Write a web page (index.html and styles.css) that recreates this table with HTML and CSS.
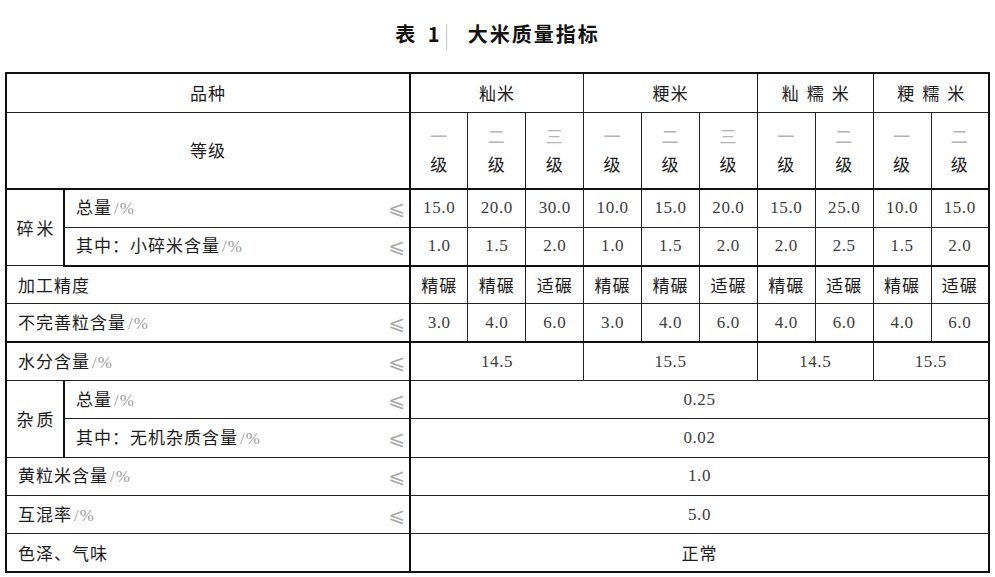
FILE: index.html
```html
<!DOCTYPE html>
<html lang="zh">
<head>
<meta charset="utf-8">
<title>表1 大米质量指标</title>
<link rel="stylesheet" href="styles.css">
</head>
<body>
<h1 class="title"><span class="t1">表 1</span><span class="tbar">|</span><span class="t2">大米质量指标</span></h1>
<table class="qt">
  <colgroup>
    <col class="c1"><col class="c2">
    <col><col><col><col><col><col><col><col><col><col>
  </colgroup>
  <tr class="rh1">
    <td colspan="2" class="cj">品种</td>
    <td colspan="3" class="cj">籼米</td>
    <td colspan="3" class="cj">粳米</td>
    <td colspan="2" class="cj wide">籼糯米</td>
    <td colspan="2" class="cj wide">粳糯米</td>
  </tr>
  <tr class="rh2 thick">
    <td colspan="2" class="cj">等级</td>
    <td class="cj grade"><span class="g">一</span><span>级</span></td>
    <td class="cj grade"><span class="g">二</span><span>级</span></td>
    <td class="cj grade"><span class="g">三</span><span>级</span></td>
    <td class="cj grade"><span class="g">一</span><span>级</span></td>
    <td class="cj grade"><span class="g">二</span><span>级</span></td>
    <td class="cj grade"><span class="g">三</span><span>级</span></td>
    <td class="cj grade"><span class="g">一</span><span>级</span></td>
    <td class="cj grade"><span class="g">二</span><span>级</span></td>
    <td class="cj grade"><span class="g">一</span><span>级</span></td>
    <td class="cj grade"><span class="g">二</span><span>级</span></td>
  </tr>
  <tr class="r">
    <td rowspan="2" class="cj grp">碎米</td>
    <td class="lab"><div class="labin"><span>总量<i>/%</i></span><span class="le">⩽</span></div></td>
    <td class="num">15.0</td><td class="num">20.0</td><td class="num">30.0</td>
    <td class="num">10.0</td><td class="num">15.0</td><td class="num">20.0</td>
    <td class="num">15.0</td><td class="num">25.0</td>
    <td class="num">10.0</td><td class="num">15.0</td>
  </tr>
  <tr class="r thick">
    <td class="lab"><div class="labin"><span>其中：小碎米含量<i>/%</i></span><span class="le">⩽</span></div></td>
    <td class="num">1.0</td><td class="num">1.5</td><td class="num">2.0</td>
    <td class="num">1.0</td><td class="num">1.5</td><td class="num">2.0</td>
    <td class="num">2.0</td><td class="num">2.5</td>
    <td class="num">1.5</td><td class="num">2.0</td>
  </tr>
  <tr class="r">
    <td colspan="2" class="lab"><div class="labin"><span>加工精度</span></div></td>
    <td class="cj">精碾</td><td class="cj">精碾</td><td class="cj">适碾</td>
    <td class="cj">精碾</td><td class="cj">精碾</td><td class="cj">适碾</td>
    <td class="cj">精碾</td><td class="cj">适碾</td>
    <td class="cj">精碾</td><td class="cj">适碾</td>
  </tr>
  <tr class="r thick">
    <td colspan="2" class="lab"><div class="labin"><span>不完善粒含量<i>/%</i></span><span class="le">⩽</span></div></td>
    <td class="num">3.0</td><td class="num">4.0</td><td class="num">6.0</td>
    <td class="num">3.0</td><td class="num">4.0</td><td class="num">6.0</td>
    <td class="num">4.0</td><td class="num">6.0</td>
    <td class="num">4.0</td><td class="num">6.0</td>
  </tr>
  <tr class="r">
    <td colspan="2" class="lab"><div class="labin"><span>水分含量<i>/%</i></span><span class="le">⩽</span></div></td>
    <td colspan="3" class="num">14.5</td>
    <td colspan="3" class="num">15.5</td>
    <td colspan="2" class="num">14.5</td>
    <td colspan="2" class="num">15.5</td>
  </tr>
  <tr class="r">
    <td rowspan="2" class="cj grp">杂质</td>
    <td class="lab"><div class="labin"><span>总量<i>/%</i></span><span class="le">⩽</span></div></td>
    <td colspan="10" class="num">0.25</td>
  </tr>
  <tr class="r">
    <td class="lab"><div class="labin"><span>其中：无机杂质含量<i>/%</i></span><span class="le">⩽</span></div></td>
    <td colspan="10" class="num">0.02</td>
  </tr>
  <tr class="r">
    <td colspan="2" class="lab"><div class="labin"><span>黄粒米含量<i>/%</i></span><span class="le">⩽</span></div></td>
    <td colspan="10" class="num">1.0</td>
  </tr>
  <tr class="r">
    <td colspan="2" class="lab"><div class="labin"><span>互混率<i>/%</i></span><span class="le">⩽</span></div></td>
    <td colspan="10" class="num">5.0</td>
  </tr>
  <tr class="r">
    <td colspan="2" class="lab"><div class="labin"><span>色泽、气味</span></div></td>
    <td colspan="10" class="cj">正常</td>
  </tr>
</table>
</body>
</html>
```
FILE: styles.css
```css
html, body {
  margin: 0;
  padding: 0;
  background: #ffffff;
}
body {
  font-family: "Noto Sans CJK SC", "Noto Sans", sans-serif;
  color: #1c1c1c;
}
.title {
  margin: 0 0 6px 0;
  height: 66px;
  display: flex;
  align-items: center;
  justify-content: center;
  font-size: 20px;
  font-weight: 700;
  color: #111;
  letter-spacing: 2px;
}
.t1 {
  letter-spacing: 4px;
}
.tbar {
  color: #c8c8c8;
  font-weight: 300;
  font-size: 24px;
  margin: 0 16px 0 0;
}
.qt {
  margin-left: 5px;
  width: 985px;
  border-collapse: collapse;
  table-layout: fixed;
  border: 2px solid #111;
}
.c1 { width: 58px; }
.c2 { width: 346px; }
.qt td {
  border: 1px solid #222;
  padding: 0;
  text-align: center;
  vertical-align: middle;
  font-size: 17px;
  line-height: 20px;
}
.rh1 { height: 39px; }
.rh2 { height: 77px; }
.r { height: 38.3px; }
.thick td { border-bottom: 2px solid #111; }
.qt td.lab { border-right: 2px solid #111; }
.qt .rh1 td:first-child, .qt .rh2 td:first-child { border-right: 2px solid #111; }
.cj {
  font-weight: 400;
  letter-spacing: 1px;
}
.wide {
  letter-spacing: 8px;
  text-indent: 8px;
}
.grade span {
  display: block;
  line-height: 28px;
}
.grade .g {
  color: #b4b4b4;
}
.qt td.grp {
  letter-spacing: 3px;
  text-indent: 3px;
  border-right: 2px solid #111;
}
.labin {
  display: flex;
  align-items: center;
  justify-content: space-between;
  padding: 0 4px 0 11px;
  text-align: left;
  letter-spacing: 1px;
}
.labin i {
  font-style: normal;
  color: #9a9a9a;
  font-family: "Liberation Serif", serif;
  font-size: 17px;
  margin-left: 2px;
}
.le {
  font-family: "DejaVu Sans", sans-serif;
  color: #a8a8a8;
  font-size: 20px;
  letter-spacing: 0;
}
.num {
  font-family: "Liberation Serif", serif;
  font-size: 16px;
  color: #3c3c3c;
  letter-spacing: 0.6px;
}
```
